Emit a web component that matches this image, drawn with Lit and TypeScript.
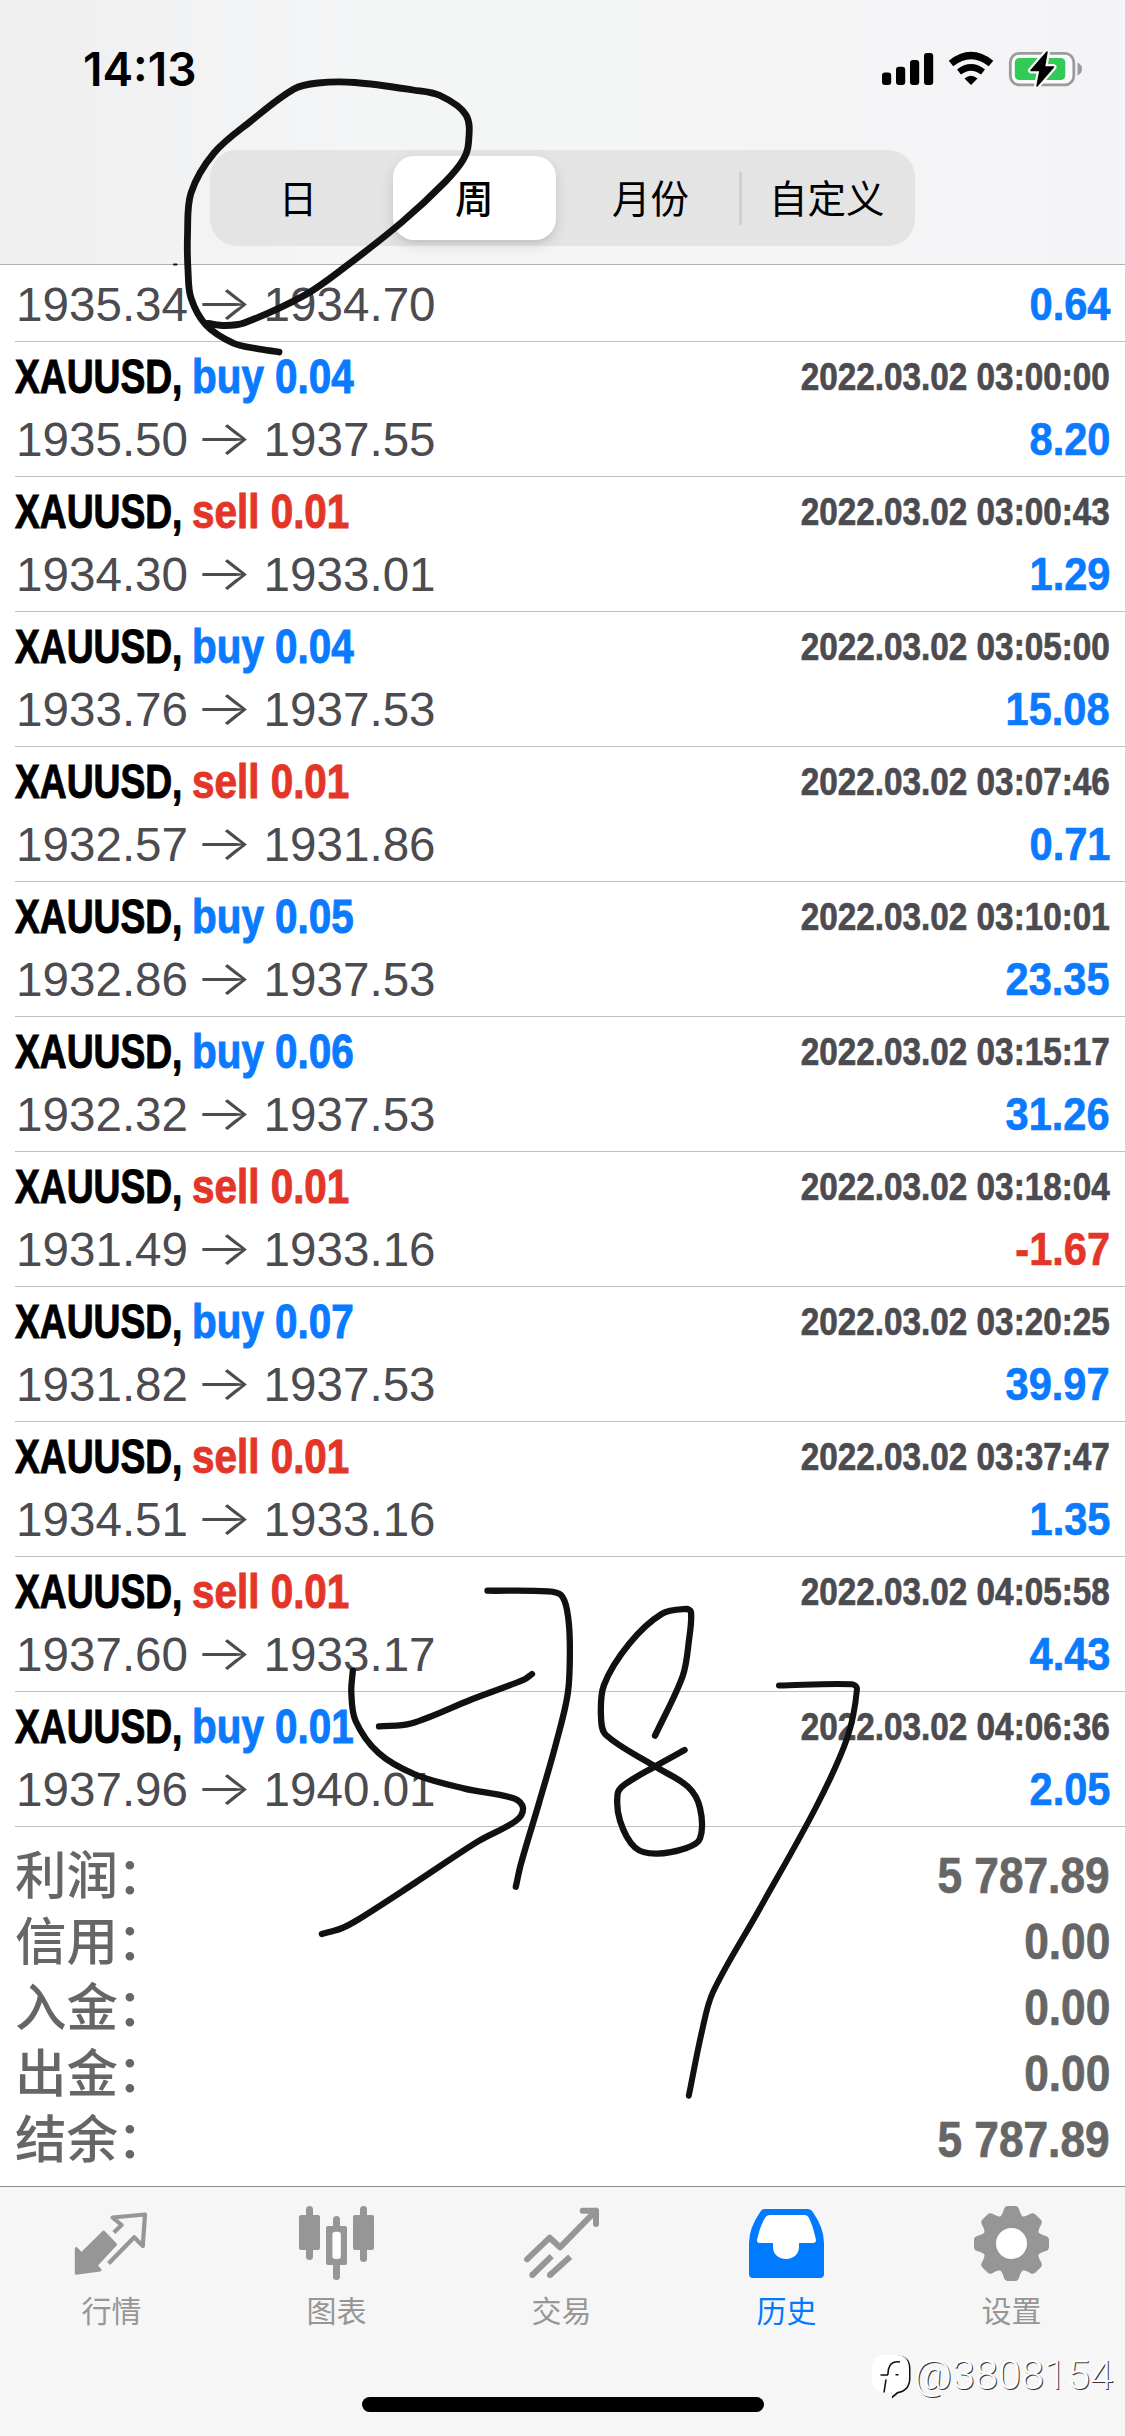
import { LitElement, html, css, svg } from "lit";
import { customElement, property } from "lit/decorators.js";
import { classMap } from "lit/directives/class-map.js";

type Point = [number, number];

interface Deal {
  side: "buy" | "sell";
  lots: string;
  time: string;
  open: string;
  close: string;
  profit: string;
}

const deal = (side: "buy" | "sell", lots: string, time: string, open: string, close: string, profit: string): Deal => ({
  side, lots, time: `2022.03.02 ${time}`, open, close, profit,
});

const DEALS: Deal[] = [
  deal("buy", "0.04", "03:00:00", "1935.50", "1937.55", "8.20"),
  deal("sell", "0.01", "03:00:43", "1934.30", "1933.01", "1.29"),
  deal("buy", "0.04", "03:05:00", "1933.76", "1937.53", "15.08"),
  deal("sell", "0.01", "03:07:46", "1932.57", "1931.86", "0.71"),
  deal("buy", "0.05", "03:10:01", "1932.86", "1937.53", "23.35"),
  deal("buy", "0.06", "03:15:17", "1932.32", "1937.53", "31.26"),
  deal("sell", "0.01", "03:18:04", "1931.49", "1933.16", "-1.67"),
  deal("buy", "0.07", "03:20:25", "1931.82", "1937.53", "39.97"),
  deal("sell", "0.01", "03:37:47", "1934.51", "1933.16", "1.35"),
  deal("sell", "0.01", "04:05:58", "1937.60", "1933.17", "4.43"),
  deal("buy", "0.01", "04:06:36", "1937.96", "1940.01", "2.05"),
];

const TOTALS: [string, string][] = [
  ["利润", "5 787.89"],
  ["信用", "0.00"],
  ["入金", "0.00"],
  ["出金", "0.00"],
  ["结余", "5 787.89"],
];

/* Freehand strokes, as sampled points. */
const STROKES: { w: number; pts: Point[] }[] = [
  { w: 6.8, pts: [[279, 352], [256, 348.5], [233, 343], [206, 325], [191, 298], [188, 270], [187.5, 235], [191, 193], [214, 153], [251, 121], [294, 89], [318, 83], [355, 82.5], [413, 90], [440, 95.5], [466, 115], [468.5, 143], [463, 160], [445, 182], [402, 222], [345, 267], [305, 295], [244, 323], [225, 325.5], [208, 323.5]] },
  { w: 6.3, pts: [[352.8, 1671], [351.3, 1692], [355.5, 1720.7], [378.5, 1752.9], [414.8, 1774.3], [464.6, 1788.6], [514.3, 1798.6], [523, 1808], [516, 1820.7], [478, 1841.4], [414.8, 1883], [357.4, 1920], [341, 1928.5], [321.8, 1934]] },
  { w: 6.3, pts: [[379, 1726.4], [411, 1723.6], [472, 1699.3], [524, 1679.6], [532, 1674]] },
  { w: 6.3, pts: [[487.5, 1590.7], [548, 1591.3], [561, 1595], [567, 1610], [569.8, 1642], [568, 1692], [556.4, 1742], [539, 1803], [521, 1863.6], [515.8, 1886.8]] },
  { w: 6.3, pts: [[655, 1735.7], [682.7, 1676], [689, 1640], [691, 1612], [686, 1609], [661.6, 1614], [629, 1644], [604, 1685], [601, 1717], [606, 1735], [655, 1766.4], [688, 1786.8], [700, 1808], [700, 1838.6], [686.5, 1848], [656, 1853.6], [635, 1847.5], [620, 1820.7], [617.6, 1794], [624, 1785], [655, 1766.4], [684.6, 1750]] },
  { w: 6, pts: [[779, 1685.4], [852, 1684.2], [857, 1689], [847, 1738.6], [816.6, 1806], [759, 1910], [713, 1992], [702, 2031], [688.8, 2095.7]] },
];

/* Catmull-Rom spline through the points, written as cubic segments. */
function spline(p: Point[]): string {
  let d = `M${p[0][0]} ${p[0][1]}`;
  for (let i = 0; i < p.length - 1; i++) {
    const a = p[Math.max(i - 1, 0)], b = p[i], c = p[i + 1], e = p[Math.min(i + 2, p.length - 1)];
    const len = Math.hypot(c[0] - b[0], c[1] - b[1]);
    const tangent = (from: Point, to: Point): Point => {
      const l = Math.hypot(to[0] - from[0], to[1] - from[1]) || 1;
      return [((to[0] - from[0]) / l) * len / 3, ((to[1] - from[1]) / l) * len / 3];
    };
    const t1 = tangent(a, c), t2 = tangent(b, e);
    d += `C${b[0] + t1[0]} ${b[1] + t1[1]} ${c[0] - t2[0]} ${c[1] - t2[1]} ${c[0]} ${c[1]}`;
  }
  return d;
}

const tooth = "M-13 -25 C-9.5 -28 -8.5 -31 -7.5 -34.5 Q-6.8 -37.3 -4 -37.5 H4 Q6.8 -37.3 7.5 -34.5 C8.5 -31 9.5 -28 13 -25 L10 -16 H-10Z";

const ICONS: Record<string, unknown> = {
  quotes: svg`
    <path d="M39.8 26.5 L47.6 19 L38.5 11.5 L71 8.5 L68.8 40 L60.2 31.3 L34.6 57.5" fill="none" stroke="currentColor" stroke-width="4.2" stroke-linejoin="round"/>
    <path d="M29.6 26 L41.5 38.5 L22 59.5 L26 64 L2.3 67.2 L2.3 42.5 L7.4 48Z" fill="currentColor" stroke="currentColor" stroke-width="3" stroke-linejoin="round"/>`,
  charts: svg`
    <g fill="currentColor">
      <rect y="9" width="21" height="35" rx="2"/><rect x="7" width="7" height="54" rx="3.5"/>
      <rect x="54" y="9" width="21" height="35" rx="2"/><rect x="61" width="7" height="56" rx="3.5"/>
      <rect x="27" y="20" width="21" height="39" rx="2"/><rect x="34" y="10" width="7" height="64" rx="3.5"/>
    </g>
    <rect x="33.4" y="25.7" width="8.4" height="27.3" rx="3" fill="#fff"/>`,
  trade: svg`
    <g fill="none" stroke="currentColor" stroke-width="6" stroke-linejoin="round">
      <path d="M3 53.3 L25.7 31.7 L36 41.3 L72 4.7 M58.7 4.7 H72 V18" stroke-linecap="round"/>
      <path d="M8.3 69 L27.7 50.2 M26 69 L46.2 50.7"/>
    </g>
    <circle cx="8.3" cy="69" r="3" fill="currentColor"/><circle cx="26" cy="69" r="3" fill="currentColor"/>`,
  history: svg`
    <path fill="currentColor" d="M16 3 H59 Q62 3 63.5 5.5 Q75 22 75 37 V68 Q75 72 71 72 H4 Q0 72 0 68 V37 Q0 22 11.5 5.5 Q13 3 16 3Z"/>
    <path fill="#fff" d="M21 9 H55.5 Q58.5 9 60 12 Q64 20 67 34 Q67.3 37 64.5 37 H50 V41 C50 57 24 57 24 41 V37 H10.5 Q7.7 37 8 34 Q11 20 16 12 Q17.5 9 21 9Z"/>`,
  settings: svg`
    <g fill="currentColor" transform="translate(37.5 37.5)">
      ${[0, 45, 90, 135, 180, 225, 270, 315].map((a) => svg`<path d=${tooth} transform=${`rotate(${a})`}/>`)}
      <circle r="26.5"/>
    </g>
    <circle cx="37.5" cy="37.5" r="15.5" fill="#fff"/>`,
};

const TABS: [string, string][] = [
  ["quotes", "行情"], ["charts", "图表"], ["trade", "交易"], ["history", "历史"], ["settings", "设置"],
];

@customElement("status-bar")
class StatusBar extends LitElement {
  static styles = css`
    :host { display: flex; justify-content: space-between; align-items: center; height: 138px; padding: 0 40px 0 83px; box-sizing: border-box; }
    .time { font: 600 46px/56px Inter, sans-serif; letter-spacing: 0; }
    .icons { display: block; }
  `;
  render() {
    return html`
      <span class="time">14:13</span>
      <svg class="icons" width="205" height="40" viewBox="880 49 205 40">
        <rect x="882" y="72.5" width="9.2" height="12.5" rx="3"/>
        <rect x="896" y="66.7" width="9.2" height="18.3" rx="3"/>
        <rect x="910" y="60" width="9.2" height="25" rx="3"/>
        <rect x="924" y="53" width="9.2" height="32" rx="3"/>
        <path d="M951 63.5 Q971 47.5 991 63.5" fill="none" stroke="#000" stroke-width="7.2"/>
        <path d="M959 72 Q971 62.7 983 72" fill="none" stroke="#000" stroke-width="6.4"/>
        <path d="M964.5 78.5 Q971 73 977.5 78.5 L971 85Z"/>
        <rect x="1010.3" y="53.3" width="63.5" height="31.5" rx="9" fill="#fbfbfb" stroke="#9b9b9d" stroke-width="2.8"/>
        <rect x="1014.8" y="58" width="50.5" height="22" rx="4.5" fill="#32cb57"/>
        <path d="M1077.5 62.5 Q1082 64.5 1082 69 Q1082 73.5 1077.5 75.5Z" fill="#9b9b9d"/>
        <path d="M1047 52 L1031 70.5 H1040 L1037 86 L1053.5 67 H1044.5Z" stroke="#fbfbfb" stroke-width="6" stroke-linejoin="round"/>
        <path d="M1047 52 L1031 70.5 H1040 L1037 86 L1053.5 67 H1044.5Z" stroke="#000" stroke-width="1.5" stroke-linejoin="round"/>
      </svg>`;
  }
}

@customElement("period-switch")
class PeriodSwitch extends LitElement {
  static styles = css`
    :host { display: grid; grid-template-columns: repeat(4, 1fr); width: 705px; height: 96px; margin: 12px 0 0 210px; border-radius: 27px; background: #e4e4e5; }
    .seg { display: flex; align-items: center; justify-content: center; padding-bottom: 5px; font: 400 38.5px/56px "Noto Sans CJK SC", sans-serif; }
    .seg:last-child { position: relative; }
    .seg:last-child::before { content: ""; position: absolute; left: 0; top: 21px; width: 3px; height: 54px; border-radius: 2px; background: #cfcfd1; }
    .on { margin: 6px 7px; border-radius: 21px; background: #fff; font-weight: 500; box-shadow: 0 5px 14px rgba(0, 0, 0, 0.12), 0 3px 3px rgba(0, 0, 0, 0.04); }
  `;
  render() {
    return html`${["日", "周", "月份", "自定义"].map(
      (t) => html`<span class=${classMap({ seg: true, on: t === "周" })}>${t}</span>`,
    )}`;
  }
}

const dealStyles = css`
  :host { display: block; font-family: "Liberation Sans", sans-serif; }
  .line { display: flex; justify-content: space-between; white-space: nowrap; }
  .prices { display: flex; height: 64px; padding-left: 1px; font-size: 47.6px; line-height: 65px; color: #4b4b50; }
  .arrow { width: 75.5px; text-align: center; font-family: Inter, sans-serif; font-weight: 300; font-size: 48px; line-height: 62px; transform: translateX(-2px) scaleX(1.27); }
  .profit { font-weight: bold; font-size: 47px; line-height: 64px; transform: scaleX(0.885); transform-origin: right; -webkit-text-stroke: 0.7px; }
  .plus { color: #0a7aff; }
  .minus { color: #e33629; }
`;

@customElement("deal-row")
class DealRow extends LitElement {
  static styles = [dealStyles, css`
    .row { box-sizing: border-box; height: 135px; margin-left: 15px; padding: 4px 15px 0 0; border-bottom: 1px solid #bfbfc1; }
    .title { display: flex; font-weight: bold; font-size: 48px; line-height: 61px; height: 61px; -webkit-text-stroke: 1px; }
    .symbol { width: 177px; transform: scaleX(0.775); transform-origin: left; }
    .order { transform: scaleX(0.842); transform-origin: left; }
    .time { height: 61px; font-weight: bold; font-size: 38px; line-height: 62px; color: #4b4b50; transform: scaleX(0.876); transform-origin: right; -webkit-text-stroke: 0.7px; }
  `];
  @property({ attribute: false }) item!: Deal;
  render() {
    const d = this.item;
    const side = { order: true, plus: d.side === "buy", minus: d.side === "sell" };
    const loss = d.profit.startsWith("-");
    return html`
      <div class="row">
        <div class="line">
          <div class="title"><span class="symbol">XAUUSD,</span><span class=${classMap(side)}>${d.side} ${d.lots}</span></div>
          <span class="time">${d.time}</span>
        </div>
        <div class="line">
          <div class="prices"><span>${d.open}</span><span class="arrow">→</span><span>${d.close}</span></div>
          <span class=${classMap({ profit: true, plus: !loss, minus: loss })}>${d.profit}</span>
        </div>
      </div>`;
  }
}

@customElement("partial-row")
class PartialRow extends LitElement {
  static styles = [dealStyles, css`
    .row { box-sizing: border-box; height: 77px; margin-left: 15px; padding: 7px 15px 0 0; border-bottom: 1px solid #bfbfc1; }
  `];
  render() {
    return html`
      <div class="row line">
        <div class="prices"><span>1935.34</span><span class="arrow">→</span><span>1934.70</span></div>
        <span class="profit plus">0.64</span>
      </div>`;
  }
}

@customElement("totals-list")
class TotalsList extends LitElement {
  static styles = css`
    :host { display: block; box-sizing: border-box; height: 359px; padding: 16px 15px 0 15px; color: #666; }
    .total { display: flex; justify-content: space-between; height: 66px; }
    .label { font: 500 51.5px/66px "Liberation Sans", "Noto Sans CJK SC", sans-serif; }
    .colon { margin-left: -1px; }
    .sum { font: bold 50px/66px "Liberation Sans", sans-serif; transform: scaleX(0.885); transform-origin: right; -webkit-text-stroke: 0.7px; }
  `;
  render() {
    return html`${TOTALS.map(([label, sum]) => html`
      <div class="total"><span class="label" lang="zh-CN">${label}<span class="colon">：</span></span><span class="sum">${sum}</span></div>`)}`;
  }
}

@customElement("tab-bar")
class TabBar extends LitElement {
  static styles = css`
    :host { display: flex; flex-direction: column; align-items: center; box-sizing: border-box; height: 250px; border-top: 1px solid #8e8e90; background: #f6f6f6; }
    .tabs { display: flex; width: 100%; height: 210px; }
    .tab { flex: 1; display: flex; flex-direction: column; align-items: center; padding: 19px 2px 0 0; color: #969696; }
    .active { color: #007aff; }
    .label { margin-top: 6px; font: 400 30px/44px "Noto Sans CJK SC", sans-serif; }
    .home { width: 402px; height: 15px; border-radius: 8px; background: #000; }
  `;
  render() {
    return html`
      <div class="tabs">
        ${TABS.map(([icon, label]) => html`
          <div class=${classMap({ tab: true, active: icon === "history" })}>
            <svg width="75" height="75" viewBox="0 0 75 75">${ICONS[icon]}</svg>
            <span class="label">${label}</span>
          </div>`)}
      </div>
      <div class="home"></div>`;
  }
}

@customElement("app-root")
class AppRoot extends LitElement {
  static styles = css`
    :host { display: block; position: relative; width: 1125px; height: 2436px; overflow: hidden; background: #fff; color: #000; }
    .header { box-sizing: border-box; height: 265px; border-bottom: 1px solid #b1b1b3; background: linear-gradient(90deg, #efeff0, #f4f5f6 30%, #f5f5f5 65%, #f4f4f8); }
    .ink { position: absolute; left: 0; top: 0; pointer-events: none; }
    .mark { position: absolute; left: 870px; top: 2349px; display: flex; align-items: center; }
    .handle { margin-left: 2px; font: 300 41.5px/52px Roboto, sans-serif; color: #fff; text-shadow: 1px 1px 0.5px #333; }
  `;
  render() {
    return html`
      <div class="header"><status-bar></status-bar><period-switch></period-switch></div>
      <partial-row></partial-row>
      ${DEALS.map((d) => html`<deal-row .item=${d}></deal-row>`)}
      <totals-list></totals-list>
      <tab-bar></tab-bar>
      <svg class="ink" width="1125" height="2436" viewBox="0 0 1125 2436" fill="none" stroke="#111" stroke-linecap="round" stroke-linejoin="round">
        <path d="M174 264.5 h2.5" stroke-width="2"/>
        ${STROKES.map((s) => svg`<path d=${spline(s.pts)} stroke-width=${s.w}/>`)}
      </svg>
      <div class="mark">
        <svg width="42" height="52" viewBox="0 0 42 52">
          <path d="M16 6.5 H27 Q40.5 6.5 40.5 20 V30 Q40 42 28 44.5 L22 49.5 L21.5 44.5Z" fill="#111"/>
          <path d="M15 6 H26 Q39 6 39 20 V29 Q39 41 27 43 L20.5 48.5 L21.5 43.5 H15 Q2 43 2 30 V20 Q2 6 15 6Z" fill="#fff"/>
          <path d="M30 13 Q20.5 11.5 18.5 20 L17.8 26 M10.5 26 H18 M16 30.5 L14 43.5 M25.5 25.7 H28.5" fill="none" stroke="#111" stroke-width="1.6"/>
        </svg>
        <span class="handle">@3808154</span>
      </div>`;
  }
}
